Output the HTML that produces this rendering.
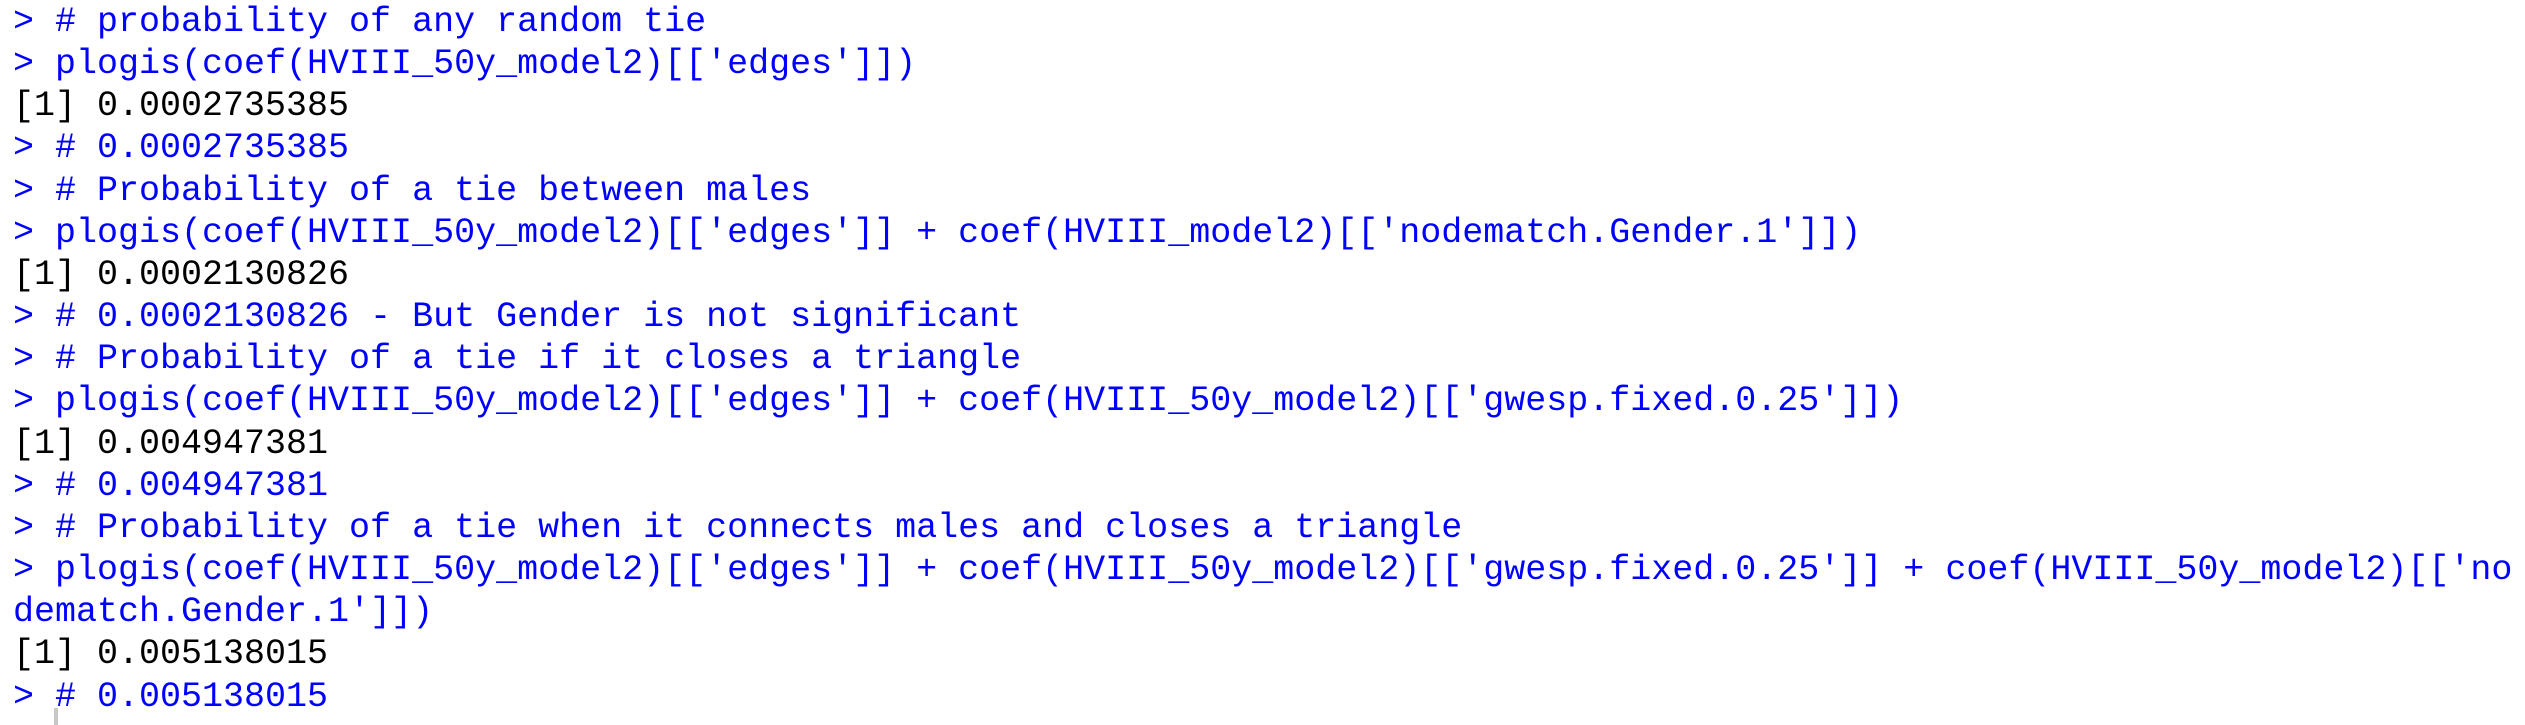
<!DOCTYPE html>
<html><head><meta charset="utf-8"><style>
html,body{margin:0;padding:0;background:#fff;width:2525px;height:725px;overflow:hidden}
pre{margin:0;position:absolute;left:13px;top:1px;font-family:"Liberation Mono",monospace;font-size:35px;line-height:42.15px;color:#0000ff;white-space:pre}
.o{color:#000}
.cur{position:absolute;left:54px;top:708px;width:4px;height:17px;background:#c8c8c8}
</style></head><body>
<pre>&gt; # probability of any random tie
&gt; plogis(coef(HVIII_50y_model2)[['edges']])
<span class="o">[1] 0.0002735385</span>
&gt; # 0.0002735385
&gt; # Probability of a tie between males
&gt; plogis(coef(HVIII_50y_model2)[['edges']] + coef(HVIII_model2)[['nodematch.Gender.1']])
<span class="o">[1] 0.0002130826</span>
&gt; # 0.0002130826 - But Gender is not significant
&gt; # Probability of a tie if it closes a triangle
&gt; plogis(coef(HVIII_50y_model2)[['edges']] + coef(HVIII_50y_model2)[['gwesp.fixed.0.25']])
<span class="o">[1] 0.004947381</span>
&gt; # 0.004947381
&gt; # Probability of a tie when it connects males and closes a triangle
&gt; plogis(coef(HVIII_50y_model2)[['edges']] + coef(HVIII_50y_model2)[['gwesp.fixed.0.25']] + coef(HVIII_50y_model2)[['no
dematch.Gender.1']])
<span class="o">[1] 0.005138015</span>
&gt; # 0.005138015</pre>
<div class="cur"></div>
</body></html>
